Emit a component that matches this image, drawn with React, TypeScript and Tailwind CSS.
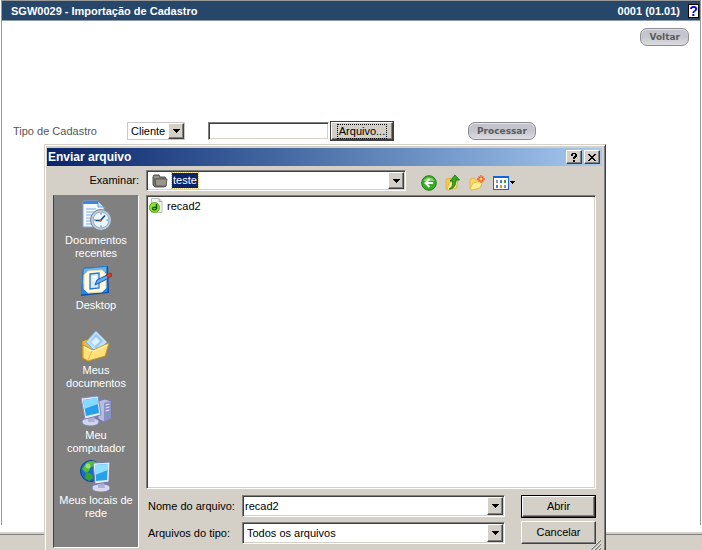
import { ReactNode, useState } from "react";

const raised =
  "bg-[#d4d0c8] border border-t-white border-l-white border-r-[#404040] border-b-[#404040] shadow-[inset_-1px_-1px_0_#808080]";
const sunken =
  "bg-white border border-t-[#808080] border-l-[#808080] border-r-white border-b-white shadow-[inset_1px_1px_0_#404040,inset_-1px_-1px_0_#d4d0c8]";

function Arrow() {
  return (
    <svg width="7" height="4" viewBox="0 0 7 4" shapeRendering="crispEdges" aria-hidden="true">
      <path d="M0 0h7v1H6v1H5v1H4v1H3V3H2V2H1V1H0z" fill="#000" />
    </svg>
  );
}

function ArrowBox() {
  return (
    <span className={`pointer-events-none flex w-4 shrink-0 items-center justify-center ${raised}`}>
      <Arrow />
    </span>
  );
}

function PillButton({ children }: { children: ReactNode }) {
  return (
    <button
      type="button"
      className="h-[18px] rounded-[7px] border border-[#8c8c94] bg-linear-to-b from-[#c2c2ca] via-[#c6c6cd] to-[#dcdce2] px-2 font-['DejaVu_Sans',sans-serif] text-[9px] leading-4 font-bold text-[#5a5a5e] shadow-[inset_0_1px_0_#e4e4ea]"
    >
      {children}
    </button>
  );
}

function RecentIcon() {
  return (
    <svg width="32" height="32" viewBox="0 0 32 32" aria-hidden="true">
      <path d="M3 1h15l6 6v20H3z" fill="#f4f9ff" stroke="#7aa5dc" />
      <path d="M3 1h15l2 3H3z" fill="#3f86e0" />
      <path d="M18 1l6 6h-6z" fill="#c8e0fa" stroke="#3f7fd0" strokeWidth=".7" />
      <path d="M6 9h10M6 12h13M6 15h6M6 18h4M6 21h4M6 24h5" stroke="#a3c5ee" strokeWidth="1.4" />
      <circle cx="21" cy="20" r="10.500" fill="#c3ccd8" stroke="#71819a" />
      <circle cx="21" cy="20" r="8" fill="#e6f7ff" stroke="#9aa8bc" />
      <path d="M21 13v1.500M21 25.500V27M14 20h1.500M26.500 20H28" stroke="#3d5f9a" />
      <path d="M25 15.500l-4.500 5h-5" fill="none" stroke="#173f78" strokeWidth="1.500" />
      <circle cx="20.500" cy="20.500" r="1.200" fill="#e0532c" />
    </svg>
  );
}

function DesktopIcon() {
  return (
    <svg width="32" height="32" viewBox="0 0 32 32" aria-hidden="true">
      <path d="M3 3l25-2 1 27-28 3z" fill="#0e4bab" />
      <path d="M3 3l24-2 .5 26L1 29.500z" fill="#2b83e2" />
      <path d="M4 4l22-2v5L3 19z" fill="#6ab5f5" />
      <path d="M8 6l14-1 4 4v14l-4 4-14 1-4-4V10z" fill="#fffbe0" stroke="#e5d9a0" />
      <path d="M10 9l9-1v15l-9 1z" fill="#d6ecff" stroke="#2576d4" strokeWidth="1.300" />
      <path d="M12 12h5M12 15h4" stroke="#fff" strokeWidth="2" />
      <path d="M15 20l2-5 10-5 2 3-10 5z" fill="#65aaf0" stroke="#1559ae" />
      <path d="M26 10l5-2 1 3-4 2z" fill="#d83f22" stroke="#801e10" strokeWidth=".6" />
    </svg>
  );
}

function DocumentsIcon() {
  return (
    <svg width="32" height="32" viewBox="0 0 32 32" aria-hidden="true">
      <path d="M2 11l9-3 3 3 12-1v15L7 31l-5-3z" fill="#e6b83e" stroke="#aa7c17" />
      <path d="M16 1l11 11-10 11L6 12z" fill="#bfe0fb" stroke="#7fb4e6" />
      <path d="M16 4l7 7-7 7-6-6z" fill="#92c6f4" />
      <path d="M11 12l5-5 4 4-5 5z" fill="#dff1ff" />
      <path d="M3 15l10 5 16-7-4 13-17 5-5-3z" fill="#ffe17a" stroke="#c8982a" />
      <path d="M4 17l9 4.500L27 15" fill="none" stroke="#fff6be" strokeWidth="1.300" />
      <path d="M8 30l4-9" stroke="#e2b544" />
    </svg>
  );
}

function ComputerIcon() {
  return (
    <svg width="32" height="32" viewBox="0 0 32 32" aria-hidden="true">
      <path d="M18 6l7-2 6 2v17l-7 4-6-3z" fill="#b6bce2" stroke="#7278b2" />
      <path d="M24 8l7-2v17l-7 4z" fill="#8991c8" />
      <path d="M25.500 10l4-1M25.500 13l4-1M25.500 16l4-1" stroke="#e9ecff" />
      <circle cx="27.500" cy="20" r="1" fill="#49c643" />
      <path d="M2 27c0-3 4-4 9-4s8 2 8 4-4 4-8 4-9-1-9-4z" fill="#d2d4ec" stroke="#7c80b4" />
      <path d="M8 20h6l1 7H8z" fill="#adb1d8" />
      <path d="M1 3l17-2 3 19-16 4z" fill="#e7e9f8" stroke="#8086ba" />
      <path d="M3 5l14-2 2 15-13 3z" fill="#279fe9" />
      <path d="M3 5l14-2 1 6L4 14z" fill="#83dcff" />
    </svg>
  );
}

function NetworkIcon() {
  return (
    <svg width="32" height="32" viewBox="0 0 32 32" aria-hidden="true">
      <circle cx="11" cy="11" r="10.500" fill="#1768d0" stroke="#0c3e8a" />
      <path d="M6 3c4-3 8-2 11-1l-2 4-4 1-2 4-3 2-4-4z" fill="#4ebc38" />
      <path d="M6 12l6 2 1 4-4 3-4-3z" fill="#36a32e" />
      <circle cx="8" cy="6" r="2.500" fill="#9ce070" />
      <path d="M12 28c0-3 4-4 9-4s9 1 9 4-5 4-9 4-9-1-9-4z" fill="#d8d9ef" stroke="#7c80b4" />
      <path d="M18 22h6l1 6h-7z" fill="#adb1d8" />
      <path d="M13 3l17-1-1 20-14 2z" fill="#e7e9f8" stroke="#747ab0" />
      <path d="M15 5l13-1-1 16-11 1z" fill="#279fe9" />
      <path d="M15 5l13-1v6l-13 5z" fill="#8ce1ff" />
    </svg>
  );
}

function FolderIcon() {
  return (
    <svg width="16" height="14" viewBox="0 0 16 14" className="shrink-0" aria-hidden="true">
      <path d="M1 11V3l1-2h5l1 2h5l1 2v7l-2 1H3z" fill="#74736a" stroke="#56554c" />
      <path d="M3 5h12l-1 7H4z" fill="#98978c" stroke="#5c5b52" />
      <path d="M2 3h5" stroke="#b5b4a9" />
    </svg>
  );
}

function FileIcon() {
  return (
    <svg width="14" height="16" viewBox="0 0 14 16" className="shrink-0" aria-hidden="true">
      <path d="M2.500.5H10l3 3v11H2.500z" fill="#f5f5f2" stroke="#bcbcb7" />
      <path d="M10 .5v3h3" fill="#ddd" stroke="#aaa" />
      <circle cx="5.500" cy="9.500" r="5" fill="#8ce328" stroke="#5cac18" />
      <path d="M7.500 6v5" stroke="#114c17" strokeWidth="1.400" />
      <ellipse cx="5.500" cy="10.500" rx="2" ry="1.400" fill="none" stroke="#114c17" strokeWidth="1.200" />
    </svg>
  );
}

function BackIcon() {
  return (
    <svg width="16" height="16" viewBox="0 0 16 16" aria-hidden="true">
      <circle cx="8" cy="8" r="7.300" fill="#37ad24" stroke="#237c17" />
      <path d="M2.500 6C4 2 11 1 13.500 6z" fill="#7ed866" />
      <path d="M8.500 4L4.500 8l4 4M5 8h7" fill="none" stroke="#fff" strokeWidth="2" />
    </svg>
  );
}

function UpIcon() {
  return (
    <svg width="16" height="16" viewBox="0 0 16 16" aria-hidden="true">
      <path d="M1 4l4-1 2 2h5v8l-9 2-2-1z" fill="#f3ca4c" stroke="#d8b145" strokeWidth=".8" />
      <path d="M2 14l3-7 8-1-2 7-8 2z" fill="#ffed91" stroke="#d8b145" strokeWidth=".8" />
      <path d="M4 14c3-1 4-4 3.500-8H5l5-6 4.500 5H11c0 5-2 9-7 9z" fill="#34a921" stroke="#18700e" strokeWidth=".8" />
    </svg>
  );
}

function NewFolderIcon() {
  return (
    <svg width="16" height="16" viewBox="0 0 16 16" aria-hidden="true">
      <path d="M1 4l4-1 2 2h5v7l-9 3-2-1z" fill="#f8d765" stroke="#d8b145" strokeWidth=".8" />
      <path d="M1 14l3-6 10-2-3 7-8 2z" fill="#ffed91" stroke="#dbb242" strokeWidth=".8" />
      <path d="M12 0v8M8 4h8M9.500 1.500l5 5M14.500 1.500l-5 5" stroke="#ee5836" strokeWidth="1.300" />
      <circle cx="12" cy="4" r="1.500" fill="#ffdf45" />
    </svg>
  );
}

function ViewIcon() {
  return (
    <svg width="16" height="14" viewBox="0 0 16 14" shapeRendering="crispEdges" aria-hidden="true">
      <path d="M0 0h16v14H0z" fill="#1565d8" />
      <path d="M1 2h14v11H1z" fill="#fff" />
      <path d="M3 4h2v3H3zM11 9h2v3h-2z" fill="#949494" />
      <path d="M7 4h2v3H7zM3 9h2v3H3z" fill="#4878d8" />
      <path d="M11 4h2v3h-2z" fill="#37a332" />
      <path d="M7 9h2v3H7z" fill="#c99e18" />
    </svg>
  );
}

const places = [
  { label: "Documentos recentes", icon: <RecentIcon /> },
  { label: "Desktop", icon: <DesktopIcon /> },
  { label: "Meus documentos", icon: <DocumentsIcon /> },
  { label: "Meu computador", icon: <ComputerIcon /> },
  { label: "Meus locais de rede", icon: <NetworkIcon /> },
];

function UploadDialog() {
  const [fileName, setFileName] = useState("recad2");

  return (
    <div
      role="dialog"
      aria-labelledby="dialog-title"
      className="absolute top-36 left-11 w-[562px] border border-t-[#d4d0c8] border-r-[#404040] border-b-[#404040] border-l-[#d4d0c8] bg-[#d4d0c8] p-[3px] pl-0.5 text-black shadow-[inset_1px_1px_0_#fff,inset_-1px_-1px_0_#808080]"
    >
      <div className="flex h-[18px] items-center bg-linear-to-r from-[#0a246a] to-[#a6caf0] pr-0.5 pl-px">
        <h2 id="dialog-title" className="flex-1 text-xs font-bold text-white">
          Enviar arquivo
        </h2>
        <div className="flex gap-0.5">
          <button type="button" aria-label="Ajuda" className={`flex h-3.5 w-4 items-center justify-center ${raised}`}>
            <svg width="6" height="9" viewBox="0 0 6 9" shapeRendering="crispEdges">
              <path d="M1 0h4v1h1v3H5v1H4v1H2V4h1V3h1V1H2v2H0V1h1zM2 7h2v2H2z" fill="#000" />
            </svg>
          </button>
          <button type="button" aria-label="Fechar" className={`flex h-3.5 w-4 items-center justify-center ${raised}`}>
            <svg width="8" height="7" viewBox="0 0 8 7" shapeRendering="crispEdges">
              <path
                d="M0 0h2v1h1v1h2V1h1V0h2v1H7v1H6v1H5v1h1v1h1v1h1v1H6V6H5V5H3v1H2v1H0V6h1V5h1V4h1V3H2V2H1V1H0z"
                fill="#000"
              />
            </svg>
          </button>
        </div>
      </div>

      <div className="flex items-center pt-1 pl-[7px]">
        <label htmlFor="folder" className="w-[85px] text-right">
          Examinar:
        </label>
        <div className={`ml-[7px] flex h-[21px] w-[260px] items-stretch p-px ${sunken}`}>
          <div className="flex flex-1 items-center gap-1 pl-1">
            <FolderIcon />
            <select
              id="folder"
              className="h-[15px] field-sizing-content appearance-none bg-[#0a246a] px-px leading-[15px] text-white outline outline-dotted outline-[#e0c870]"
            >
              <option>teste</option>
            </select>
          </div>
          <ArrowBox />
        </div>
        <div className="ml-[15px] flex items-center gap-2 pt-1">
          <button type="button" aria-label="Voltar à pasta anterior">
            <BackIcon />
          </button>
          <button type="button" aria-label="Um nível acima">
            <UpIcon />
          </button>
          <button type="button" aria-label="Criar nova pasta">
            <NewFolderIcon />
          </button>
          <button type="button" aria-label="Menu Exibir" className="flex items-center gap-px">
            <ViewIcon />
            <svg width="5" height="3" viewBox="0 0 5 3" shapeRendering="crispEdges">
              <path d="M0 0h5v1H4v1H3v1H2V2H1V1H0z" fill="#000" />
            </svg>
          </button>
        </div>
      </div>

      <div className="flex gap-[7px] pt-1 pr-1.5 pb-px pl-[6px]">
        <nav className="w-[86px] shrink-0 border border-t-[#808080] border-r-white border-b-white border-l-[#404040] bg-[#808080] pt-1">
          {places.map((place) => (
            <button
              type="button"
              key={place.label}
              className="flex h-[65px] w-full flex-col items-center gap-0.5 leading-[13px] text-white"
            >
              {place.icon}
              <span className="px-1">{place.label}</span>
            </button>
          ))}
        </nav>
        <div className="flex-1 pb-1">
          <ul className={`h-[294px] p-0.5 ${sunken}`}>
            <li className="flex h-4 items-center gap-1">
              <FileIcon />
              recad2
            </li>
          </ul>
          <div className="flex justify-between pt-1.5">
            <div className="flex flex-col gap-[5px]">
              <div className="flex items-center">
                <label htmlFor="file-name" className="w-24 pl-0.5">
                  Nome do arquivo:
                </label>
                <div className={`flex h-[22px] w-[263px] p-px ${sunken}`}>
                  <input
                    id="file-name"
                    value={fileName}
                    onChange={(e) => setFileName(e.target.value)}
                    className="min-w-0 flex-1 pl-px outline-none"
                  />
                  <ArrowBox />
                </div>
              </div>
              <div className="flex items-center">
                <label htmlFor="file-type" className="w-24 pl-0.5">
                  Arquivos do tipo:
                </label>
                <div className={`flex h-[22px] w-[263px] p-px ${sunken}`}>
                  <select id="file-type" className="min-w-0 flex-1 appearance-none pl-[3px] outline-none">
                    <option>Todos os arquivos</option>
                  </select>
                  <ArrowBox />
                </div>
              </div>
            </div>
            <div className="flex flex-col gap-[3px]">
              <button type="button" className="h-[23px] w-[75px] border border-black">
                <span className={`flex h-full items-center justify-center ${raised}`}>Abrir</span>
              </button>
              <button type="button" className={`h-[23px] w-[75px] ${raised}`}>
                Cancelar
              </button>
            </div>
          </div>
        </div>
      </div>
      <svg width="12" height="12" viewBox="0 0 12 12" className="absolute right-1 bottom-0" aria-hidden="true">
        <path d="M0 12L12 0M4 12l8-8M8 12l4-4" stroke="#808080" strokeWidth="1.500" />
        <path d="M-1 12L12-1M3 12l9-9M7 12l5-5" stroke="#fff" strokeWidth=".7" />
      </svg>
    </div>
  );
}

export default function App() {
  const [path, setPath] = useState("");

  return (
    <div className="relative flex h-screen flex-col overflow-hidden bg-white font-['Liberation_Sans',Arial,sans-serif] text-[11px] leading-[13px]">
      <main className="mr-px ml-px flex-1 border-x border-t border-[#999]">
        <header className="flex h-5 items-center border-b border-[#8c9aaa] bg-[#26466a] pt-px pr-px pl-[9px] font-bold text-white">
          <h1 className="flex-1">SGW0029 - Importação de Cadastro</h1>
          <span>0001 (01.01)</span>
          <button
            type="button"
            aria-label="Ajuda"
            className="ml-2 flex h-3.5 w-[11px] items-center justify-center border border-black bg-[#ffffe6] text-sm leading-3 text-[#0000e0]"
          >
            ?
          </button>
        </header>
        <div className="flex justify-end pt-[7px] pr-[11px]">
          <PillButton>Voltar</PillButton>
        </div>
        <form className="mt-[75px] flex h-5 items-center pl-[11px]" onSubmit={(e) => e.preventDefault()}>
          <label htmlFor="tipo" className="w-[114px] text-[#555]">
            Tipo de Cadastro
          </label>
          <div className="flex h-[18px] w-[58px] border border-[#c8c8c8]">
            <select id="tipo" className="min-w-0 flex-1 appearance-none pl-[3px] text-black outline-none">
              <option>Cliente</option>
            </select>
            <ArrowBox />
          </div>
          <input
            aria-label="Caminho do arquivo"
            value={path}
            onChange={(e) => setPath(e.target.value)}
            className={`ml-[23px] h-[18px] w-[121px] px-1 outline-none ${sunken}`}
          />
          <button type="button" className="ml-px h-5 w-16 border border-[#404040] text-black">
            <span className={`flex h-full items-center justify-center ${raised}`}>
              <span className="border border-dotted border-black px-px">Arquivo...</span>
            </span>
          </button>
          <div className="ml-[74px] flex">
            <PillButton>Processar</PillButton>
          </div>
        </form>
      </main>
      <footer className="mt-[7px] h-[18px] border-t-2 border-[#d4d0c8] bg-[#d4d0c8]">
        <div className="border-t border-[#808080]" />
      </footer>
      <UploadDialog />
    </div>
  );
}
